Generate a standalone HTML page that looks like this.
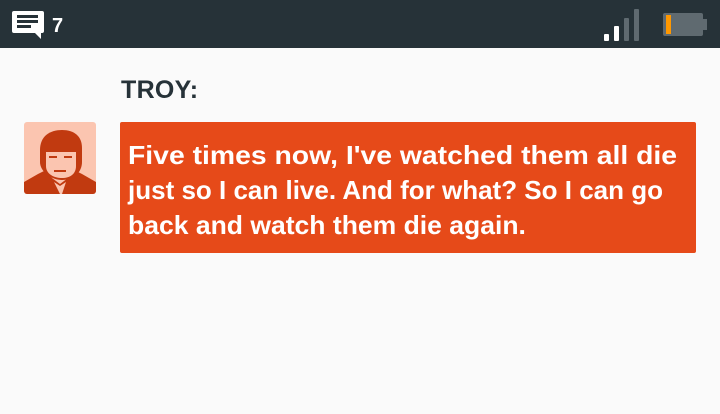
<!DOCTYPE html>
<html><head><style>
body{margin:0;width:720px;height:414px;background:#fafafa;font-family:"Liberation Sans",sans-serif;overflow:hidden;position:relative}
.bar{position:absolute;left:0;top:0;width:720px;height:48px;background:#263238}
.name{position:absolute;left:121px;top:76px;font-weight:bold;font-size:25px;color:#263238;letter-spacing:0.3px}
.av{position:absolute;left:24px;top:122px;width:72px;height:72px;background:#fbc5b0;border-radius:3px;overflow:hidden}
.bub{position:absolute;left:120px;top:122px;width:576px;height:131px;background:#e64a19;border-radius:2px}
.l{position:absolute;left:128px;color:#fff;font-weight:bold;font-size:26px;line-height:35px;white-space:nowrap;transform-origin:left}
</style></head><body>
<div class="bar">
<svg width="720" height="48" style="position:absolute;left:0;top:0">
<path d="M14 11h28a2 2 0 0 1 2 2v18a2 2 0 0 1-2 2h-1v6l-6-6h-21a2 2 0 0 1-2-2v-18a2 2 0 0 1 2-2z" fill="#fff"/>
<rect x="17" y="15" width="21" height="3" fill="#263238"/>
<rect x="17" y="20" width="21" height="3" fill="#263238"/>
<rect x="17" y="25" width="14" height="3" fill="#263238"/>
<text x="52" y="32" fill="#fff" font-family="Liberation Sans" font-weight="bold" font-size="20">7</text>
<rect x="604" y="34" width="5" height="7" rx="1" fill="#fff"/>
<rect x="614" y="26" width="5" height="15" rx="1" fill="#fff"/>
<rect x="624" y="18" width="5" height="23" rx="1" fill="#5f6a70"/>
<rect x="634" y="9" width="5" height="32" rx="1" fill="#5f6a70"/>
<rect x="663" y="13" width="40" height="23" rx="2" fill="#5f6a70"/>
<rect x="703" y="19" width="4" height="11" fill="#5f6a70"/>
<rect x="666" y="15" width="5" height="19" fill="#ff9800"/>
</svg>
</div>
<div class="name">TROY:</div>
<div class="av">
<svg width="72" height="72">
<path d="M0 72V60l14-8 8-4 6 8 8 6 8-6 6-8 8 4 14 8v12z" fill="#c13a10"/>
<path d="M16 28c0-14 10-20 22-20 12 0 20 6 20 18v14c0 10-8 18-20 18-10 0-22-8-22-18z" fill="#c13a10"/>
<path d="M22 30h30v14c0 8-6 12-14 12s-16-4-16-12z" fill="#fbc5b0"/>
<rect x="25" y="34" width="8" height="2" fill="#c13a10"/>
<rect x="40" y="34" width="8" height="2" fill="#c13a10"/>
<rect x="30" y="48" width="12" height="2" fill="#c13a10"/>
<path d="M30 60l6 12h2l4-12-6 4z" fill="#fbc5b0"/>
</svg>
</div>
<div class="bub"></div>
<div class="l" style="top:138px;transform:scaleX(1.09)">Five times now, I've watched them all die</div>
<div class="l" style="top:173px;transform:scaleX(1.0)">just so I can live. And for what? So I can go</div>
<div class="l" style="top:208px;transform:scaleX(1.02)">back and watch them die again.</div>
</body></html>
